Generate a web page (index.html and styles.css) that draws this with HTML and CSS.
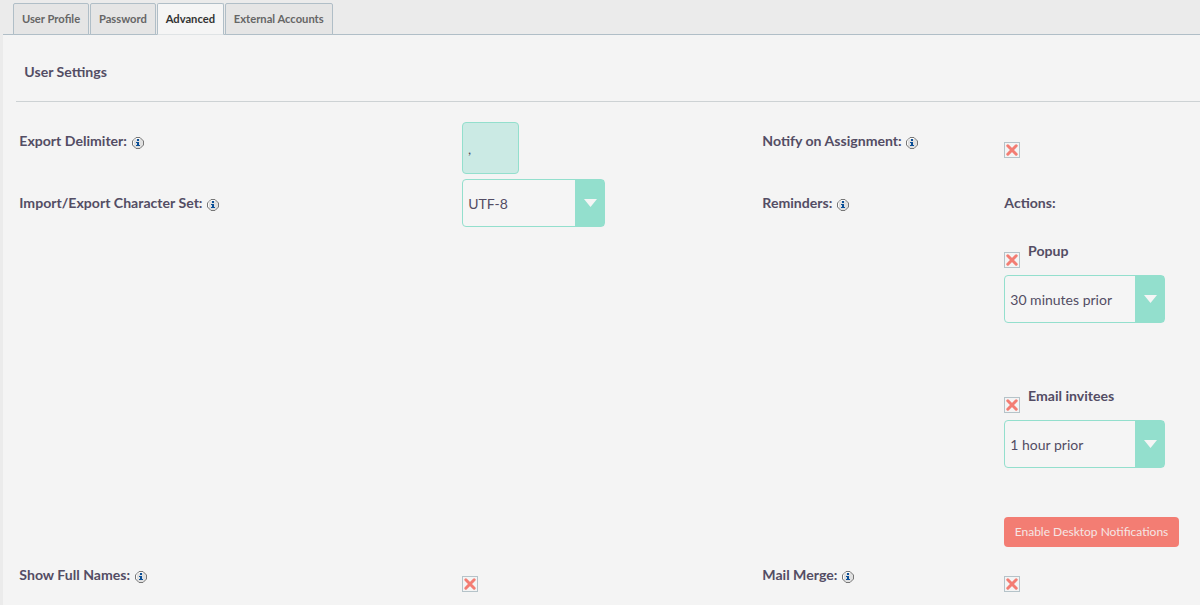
FILE: index.html
```html
<!DOCTYPE html>
<html lang="en">
<head>
<meta charset="utf-8">
<title>User Settings</title>
<link rel="stylesheet" href="styles.css">
</head>
<body>
<svg class="defs" width="0" height="0" aria-hidden="true">
  <symbol id="info" viewBox="0 0 12 12">
    <path d="M4 .5h4L11.500 4v4L8 11.500H4L.5 8V4z" fill="#e0e0e0" stroke="#777"/>
    <path d="M4 1.500h4M2 3.500l1.500-1.500M1.500 4v4" stroke="#fafafa" fill="none"/>
    <path d="M5 2h2v2H5zM4 5h3v3h1v1H4V8h1V6H4z" fill="#0a4e96"/>
  </symbol>
  <symbol id="cross" viewBox="0 0 14 14">
    <path d="M2.800 2.800 11.200 11.200M11.200 2.800 2.800 11.200" stroke="#f37d73" stroke-width="3" stroke-linecap="round"/>
  </symbol>
</svg>
<nav class="tabs">
  <a class="tab">User Profile</a>
  <a class="tab">Password</a>
  <a class="tab active">Advanced</a>
  <a class="tab">External Accounts</a>
</nav>
<main class="panel">
  <h4 class="title">User Settings</h4>
  <div class="settings">
    <div class="row">
      <div class="label">Export Delimiter: <svg class="info"><use href="#info"/></svg></div>
      <div class="cell"><input class="delimiter" type="text" value=","></div>
      <div class="label">Notify on Assignment: <svg class="info"><use href="#info"/></svg></div>
      <div class="cell"><svg class="check lone"><use href="#cross"/></svg></div>
    </div>
    <div class="row reminders">
      <div class="label">Import/Export Character Set: <svg class="info"><use href="#info"/></svg></div>
      <div class="cell"><div class="select charset"><span class="value">UTF-8</span><span class="arrow"></span></div></div>
      <div class="label">Reminders: <svg class="info"><use href="#info"/></svg></div>
      <div class="cell">
        <div class="label actions">Actions:</div>
        <div class="reminder">
          <div class="option"><svg class="check"><use href="#cross"/></svg><span class="caption">Popup</span></div>
          <div class="select"><span class="value">30 minutes prior</span><span class="arrow"></span></div>
        </div>
        <div class="reminder">
          <div class="option"><svg class="check"><use href="#cross"/></svg><span class="caption">Email invitees</span></div>
          <div class="select"><span class="value">1 hour prior</span><span class="arrow"></span></div>
        </div>
        <button class="button">Enable Desktop Notifications</button>
      </div>
    </div>
    <div class="row">
      <div class="label">Show Full Names: <svg class="info"><use href="#info"/></svg></div>
      <div class="cell"><svg class="check lone"><use href="#cross"/></svg></div>
      <div class="label">Mail Merge: <svg class="info"><use href="#info"/></svg></div>
      <div class="cell"><svg class="check lone"><use href="#cross"/></svg></div>
    </div>
  </div>
</main>
</body>
</html>
```
FILE: styles.css
```css
* { box-sizing: border-box; }
body {
  margin: 0;
  height: 605px;
  overflow: hidden;
  background: #ebebeb;
  color: #534d64;
  font: 14px/20px Lato, sans-serif;
}
.defs { display: block; height: 0; }
.tabs {
  display: flex;
  gap: 1px;
  height: 35px;
  margin-left: 3px;
  padding: 3px 0 0 10px;
  border-bottom: 1px solid #b0bec7;
}
.tab {
  height: 32px;
  padding: 0 7.900px;
  border: 1px solid #b0bec7;
  border-radius: 2px 2px 0 0;
  background: #e5e5e5;
  color: #666;
  font-size: 11.2px;
  font-weight: 700;
  line-height: 30px;
}
.tab.active { background: #f5f5f5; color: #333; border-bottom-color: #dfe3e5; }
.panel { margin-left: 3px; height: 570px; background: #f4f4f4; }
.title {
  height: 67px;
  margin: 0 0 0 13px;
  padding: 27px 8px 0 8.300px;
  border-bottom: 1px solid #cdd2d4;
  font-size: 14.1px;
}
.settings { padding: 14px 0 0 16px; }
.row { display: grid; grid-template-columns: 443px 300px 242px 1fr; height: 62px; }
.row.reminders { height: 372px; }
.label {
  display: flex;
  gap: 4.700px;
  align-items: flex-start;
  padding: 15px 0 0 .3px;
  font-size: 14.1px;
  font-weight: 700;
}
.label .info { margin-top: 6px; }
.info { width: 12px; height: 12px; flex: none; }
.check { display: block; width: 16px; height: 16px; border: 1px solid #b5c3c9; }
.check.lone { margin-top: 26px; }
.delimiter {
  display: block;
  width: 57px;
  height: 52px;
  margin-top: 6px;
  padding: 0 5px;
  border: 1px solid #93dfcd;
  border-radius: 4px;
  background: #cbeae4;
  color: #534d64;
  font: 14px Lato, sans-serif;
}
.select {
  display: flex;
  width: 161px;
  height: 48px;
  border: 1px solid #93dfcd;
  border-radius: 4px;
  background: #f5f5f5;
}
.select.charset { width: 143px; margin-top: 1px; }
.value { flex: 1; padding-left: 5.300px; line-height: 48px; }
.arrow { width: 29px; padding: 19px 0 0 9px; background: #93dfcd; }
.arrow::before {
  content: "";
  display: block;
  width: 13px;
  height: 8px;
  background: #f5f5f5;
  clip-path: polygon(0 0, 100% 0, 50% 100%);
}
.actions { height: 64px; }
.reminder { height: 145px; }
.option { display: flex; gap: 8px; height: 33px; }
.option .check { margin-top: 10px; }
.caption { font-size: 14.1px; font-weight: 700; line-height: 18px; }
.button {
  display: block;
  width: 175px;
  height: 30px;
  margin-top: -15px;
  padding: 0 0 2px;
  border: 0;
  border-radius: 4px;
  background: #f37d73;
  color: #f5e6e5;
  font: 12px Lato, sans-serif;
}
```
